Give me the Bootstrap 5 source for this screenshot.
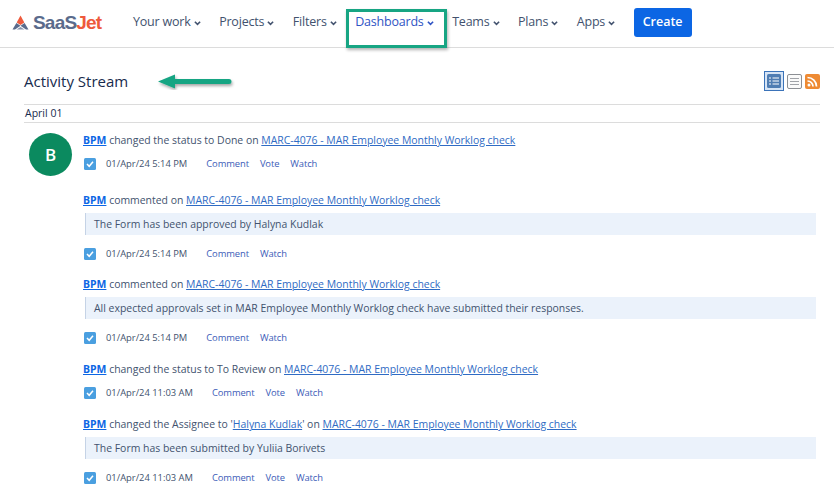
<!DOCTYPE html>
<html lang="en">
<head>
    <meta charset="UTF-8">
    <title>Activity Stream</title>
    <link href="https://cdn.jsdelivr.net/npm/bootstrap@5.3.3/dist/css/bootstrap.min.css" rel="stylesheet">
    <style>
        html, body { height: 489px; overflow: hidden; }
        body { font-family: "Open Sans", "Noto Sans", sans-serif; color: #42526e; background: #fff; position: relative; }
        .top-bar { height: 48px; border-bottom: 1px solid #dcdcdc; padding: 0 0 2px 12px; }
        .logo-box { width: 90px; margin-right: 31px; gap: 4px; }
        .logo-word { font-family: "Liberation Sans", sans-serif; font-size: 19px; font-weight: 700; letter-spacing: -.8px; color: #5a6b8c; line-height: 1; }
        .logo-word span { color: #ee5a3c; }
        .top-item { font-size: 12.500px; color: #42526e; letter-spacing: -.2px; text-decoration: none; display: flex; align-items: center; gap: 3px; white-space: nowrap; }
        .top-item.is-active { color: #2f54c4; }
        .top-item svg { width: 7px; height: 6px; }
        .top-nav { gap: 18.500px; }
        .create-btn { background: #0c66e4; color: #fff; font-size: 12.500px; font-weight: 600; width: 58px; height: 29px; padding: 0; border: 0; border-radius: 3px; }
        .mark-box { position: absolute; left: 346px; top: 9px; width: 101px; height: 39px; border: 3px solid #17a583; box-shadow: 1px 2px 3px rgba(0,0,0,.3); }
        .mark-arrow { position: absolute; left: 157px; top: 71px; }
        .stream { padding: 0 14px 0 24px; }
        .stream-head { height: 57px; border-bottom: 1px solid #dcdcdc; padding-top: 10px; }
        .stream-title { font-size: 15px; font-weight: 500; color: #172b4d; margin: 0; }
        .view-icons { gap: 3px; }
        .date-row { font-size: 10.500px; color: #172b4d; height: 18px; line-height: 17px; border-bottom: 1px solid #dcdcdc; padding-left: 1px; }
        .avatar-dot { width: 43px; height: 43px; border-radius: 50%; background: #0b8a5f; color: #fff; font-size: 17px; font-weight: 600; margin: 10px 11px 0 5px; flex: none; }
        .feed { flex: 1; min-width: 0; padding-top: 10px; }
        .feed-item { margin-bottom: 17px; font-size: 10.450px; }
        .feed-item.is-first { margin-bottom: 22px; }
        .feed-item.is-tight { margin-bottom: 16px; }
        .feed-line { line-height: 15px; color: #42526e; white-space: nowrap; }
        .feed-line a { color: #2f6bc4; }
        .feed-line a.who { color: #0c66e4; font-weight: 700; }
        .feed-quote { background: #ebf2fb; border-left: 1px solid #c5d3e6; margin: 5px 4px 0 2px; height: 22px; line-height: 22px; padding-left: 8px; color: #42526e; }
        .feed-meta { margin-top: 9px; height: 14px; line-height: 14px; font-size: 9.400px; color: #42526e; white-space: nowrap; }
        .feed-quote + .feed-meta { margin-top: 12px; }
        .feed-meta svg { margin: 0 10px 0 1px; flex: none; }
        .feed-meta a { color: #3c5cb8; text-decoration: none; margin-right: 11px; letter-spacing: -.1px; }
        .feed-meta a:first-of-type { margin-left: 19px; }
    </style>
</head>

<body>
    <!-- barra superior -->
    <header class="top-bar d-flex align-items-center">
        <div class="logo-box d-flex align-items-center">
            <svg width="17" height="16" viewBox="0 0 17 16"><path d="M8.500 0.500l3.800 7L8.500 10 4.700 7.500z" fill="#ee5a3c"/><path d="M4.400 8L8.500 10.800 3 14.500H0.500z" fill="#5a6b8c"/><path d="M12.600 8L8.500 10.800 14 14.500h2.500z" fill="#5a6b8c"/><path d="M4.500 14.500L8.500 12l4 2.500z" fill="#8794ad"/></svg>
            <div class="logo-word">SaaS<span>Jet</span></div>
        </div>
        <nav class="top-nav d-flex align-items-center">
            <a class="top-item" href="#">Your work <svg viewBox="0 0 8 6"><path d="M1 1.500l3 3 3-3" fill="none" stroke="currentColor" stroke-width="1.800"/></svg></a>
            <a class="top-item" href="#">Projects <svg viewBox="0 0 8 6"><path d="M1 1.500l3 3 3-3" fill="none" stroke="currentColor" stroke-width="1.800"/></svg></a>
            <a class="top-item" href="#">Filters <svg viewBox="0 0 8 6"><path d="M1 1.500l3 3 3-3" fill="none" stroke="currentColor" stroke-width="1.800"/></svg></a>
            <a class="top-item is-active" href="#">Dashboards <svg viewBox="0 0 8 6"><path d="M1 1.500l3 3 3-3" fill="none" stroke="currentColor" stroke-width="1.800"/></svg></a>
            <a class="top-item" href="#">Teams <svg viewBox="0 0 8 6"><path d="M1 1.500l3 3 3-3" fill="none" stroke="currentColor" stroke-width="1.800"/></svg></a>
            <a class="top-item" href="#">Plans <svg viewBox="0 0 8 6"><path d="M1 1.500l3 3 3-3" fill="none" stroke="currentColor" stroke-width="1.800"/></svg></a>
            <a class="top-item" href="#">Apps <svg viewBox="0 0 8 6"><path d="M1 1.500l3 3 3-3" fill="none" stroke="currentColor" stroke-width="1.800"/></svg></a>
            <button type="button" class="btn create-btn">Create</button>
        </nav>
    </header>

    <!-- anotacoes por cima da tela -->
    <div class="mark-box"></div>
    <svg class="mark-arrow" width="78" height="24" viewBox="0 0 78 24"><defs><filter id="sombra"><feDropShadow dx="1" dy="2" stdDeviation="1.500" flood-opacity=".35"/></filter></defs><path d="M1 10.500l17-7v4.500h54a2.500 2.500 0 0 1 0 5H18v4.500z" fill="#17a583" filter="url(#sombra)"/></svg>

    <main class="stream">
        <div class="stream-head d-flex justify-content-between align-items-center">
            <h1 class="stream-title">Activity Stream</h1>
            <div class="view-icons d-flex align-items-center">
                <svg width="20" height="20" viewBox="0 0 20 20"><rect x=".5" y=".5" width="19" height="19" fill="#d6e4f5" stroke="#3b73b9"/><rect x="3" y="3" width="14" height="14" rx="1.500" fill="#4f7db3"/><path d="M5 7h2M5 10h2M5 13h2M8.500 7H15M8.500 10H15M8.500 13H15" stroke="#fff" stroke-width="1.200"/></svg>
                <svg width="15" height="15" viewBox="0 0 15 15"><rect x=".5" y=".5" width="14" height="14" rx="1.500" fill="#fafafa" stroke="#8c8f94"/><path d="M3 4.500h9M3 7.500h9M3 10.500h9" stroke="#a0a3a8"/></svg>
                <svg width="15" height="15" viewBox="0 0 15 15"><rect width="15" height="15" rx="2" fill="#ee8a33"/><circle cx="4" cy="11" r="1.500" fill="#fff"/><path d="M2.500 7a5.500 5.500 0 0 1 5.500 5.500M2.500 3.500a9 9 0 0 1 9 9" fill="none" stroke="#fff" stroke-width="1.700"/></svg>
            </div>
        </div>
        <div class="date-row">April 01</div>

        <div class="d-flex">
            <div class="avatar-dot d-flex align-items-center justify-content-center">B</div>
            <div class="feed">
                <div class="feed-item is-first">
                    <div class="feed-line"><a class="who" href="#">BPM</a> changed the status to Done on <a href="#">MARC-4076 - MAR Employee Monthly Worklog check</a></div>
                    <div class="feed-meta d-flex align-items-center"><svg width="12" height="12" viewBox="0 0 12 12"><rect width="12" height="12" rx="1.500" fill="#4a9fe0"/><path d="M3 6l2.200 2.300L9 3.800" fill="none" stroke="#fff" stroke-width="1.500"/></svg>01/Apr/24 5:14 PM<a href="#">Comment</a><a href="#">Vote</a><a href="#">Watch</a></div>
                </div>
                <div class="feed-item is-tight">
                    <div class="feed-line"><a class="who" href="#">BPM</a> commented on <a href="#">MARC-4076 - MAR Employee Monthly Worklog check</a></div>
                    <div class="feed-quote">The Form has been approved by Halyna Kudlak</div>
                    <div class="feed-meta d-flex align-items-center"><svg width="12" height="12" viewBox="0 0 12 12"><rect width="12" height="12" rx="1.500" fill="#4a9fe0"/><path d="M3 6l2.200 2.300L9 3.800" fill="none" stroke="#fff" stroke-width="1.500"/></svg>01/Apr/24 5:14 PM<a href="#">Comment</a><a href="#">Watch</a></div>
                </div>
                <div class="feed-item">
                    <div class="feed-line"><a class="who" href="#">BPM</a> commented on <a href="#">MARC-4076 - MAR Employee Monthly Worklog check</a></div>
                    <div class="feed-quote">All expected approvals set in MAR Employee Monthly Worklog check have submitted their responses.</div>
                    <div class="feed-meta d-flex align-items-center"><svg width="12" height="12" viewBox="0 0 12 12"><rect width="12" height="12" rx="1.500" fill="#4a9fe0"/><path d="M3 6l2.200 2.300L9 3.800" fill="none" stroke="#fff" stroke-width="1.500"/></svg>01/Apr/24 5:14 PM<a href="#">Comment</a><a href="#">Watch</a></div>
                </div>
                <div class="feed-item">
                    <div class="feed-line"><a class="who" href="#">BPM</a> changed the status to To Review on <a href="#">MARC-4076 - MAR Employee Monthly Worklog check</a></div>
                    <div class="feed-meta d-flex align-items-center"><svg width="12" height="12" viewBox="0 0 12 12"><rect width="12" height="12" rx="1.500" fill="#4a9fe0"/><path d="M3 6l2.200 2.300L9 3.800" fill="none" stroke="#fff" stroke-width="1.500"/></svg>01/Apr/24 11:03 AM<a href="#">Comment</a><a href="#">Vote</a><a href="#">Watch</a></div>
                </div>
                <div class="feed-item">
                    <div class="feed-line"><a class="who" href="#">BPM</a> changed the Assignee to '<a href="#">Halyna Kudlak</a>' on <a href="#">MARC-4076 - MAR Employee Monthly Worklog check</a></div>
                    <div class="feed-quote">The Form has been submitted by Yuliia Borivets</div>
                    <div class="feed-meta d-flex align-items-center"><svg width="12" height="12" viewBox="0 0 12 12"><rect width="12" height="12" rx="1.500" fill="#4a9fe0"/><path d="M3 6l2.200 2.300L9 3.800" fill="none" stroke="#fff" stroke-width="1.500"/></svg>01/Apr/24 11:03 AM<a href="#">Comment</a><a href="#">Vote</a><a href="#">Watch</a></div>
                </div>
            </div>
        </div>
    </main>
    <script src="https://cdn.jsdelivr.net/npm/bootstrap@5.3.3/dist/js/bootstrap.bundle.min.js"></script>
</body>

</html>
